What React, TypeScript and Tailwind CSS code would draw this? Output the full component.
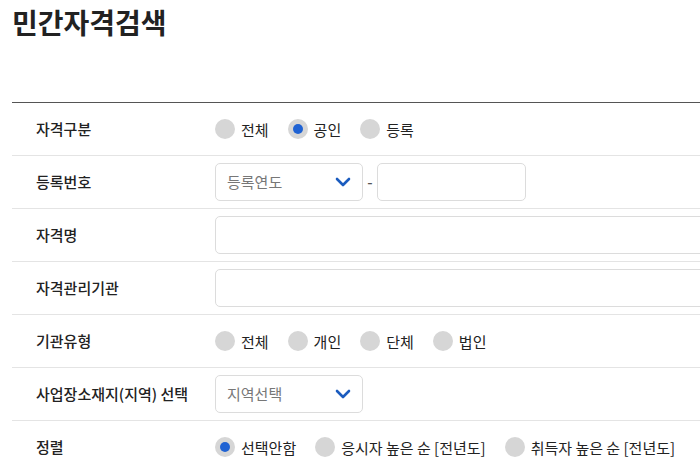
import React from "react";

const font = { fontFamily: '"Noto Sans CJK KR", "Noto Sans", sans-serif' };

function Radio({ label, checked }: { label: string; checked?: boolean }) {
  return (
    <label className="flex items-center gap-[6px] mr-[19px]">
      <span className="w-[20px] h-[20px] rounded-full bg-[#d6d6d6] flex items-center justify-center">
        {checked && <span className="w-[10px] h-[10px] rounded-full bg-[#1f62d3]" />}
      </span>
      <span className="text-[15px] text-[#222] leading-none">{label}</span>
    </label>
  );
}

function Chevron() {
  return (
    <svg width="16" height="10" viewBox="0 0 16 10" fill="none">
      <path d="M2 2l6 6 6-6" stroke="#1b5cbf" strokeWidth="2.6" strokeLinecap="round" strokeLinejoin="round" />
    </svg>
  );
}

function Select({ placeholder }: { placeholder: string }) {
  return (
    <div className="w-[148px] h-[38px] border border-[#dcdcdc] rounded-[5px] flex items-center justify-between pl-[11px] pr-[11px]">
      <span className="text-[15px] text-[#777]">{placeholder}</span>
      <Chevron />
    </div>
  );
}

function Row({ label, children }: { label: string; children: React.ReactNode }) {
  return (
    <div className="h-[53px] border-b border-[#e4e4e4] flex items-center">
      <div className="w-[203px] pl-[24px] text-[15px] font-medium text-[#222] shrink-0">{label}</div>
      <div className="flex items-center">{children}</div>
    </div>
  );
}

export default function App() {
  return (
    <div className="w-[700px] h-[467px] overflow-hidden bg-white" style={font}>
      <div className="w-[1000px] pl-[12px]">
        <h1 className="text-[28px] font-bold text-[#222] leading-[36px] pt-[4px]">민간자격검색</h1>
        <div className="mt-[62px] border-t border-[#555]">
          <Row label="자격구분">
            <Radio label="전체" />
            <Radio label="공인" checked />
            <Radio label="등록" />
          </Row>
          <Row label="등록번호">
            <Select placeholder="등록연도" />
            <span className="w-[14px] text-center text-[15px] text-[#555] font-medium">-</span>
            <div className="w-[149px] h-[38px] border border-[#dcdcdc] rounded-[5px]" />
          </Row>
          <Row label="자격명">
            <div className="w-[600px] h-[38px] border border-[#dcdcdc] rounded-[5px]" />
          </Row>
          <Row label="자격관리기관">
            <div className="w-[600px] h-[38px] border border-[#dcdcdc] rounded-[5px]" />
          </Row>
          <Row label="기관유형">
            <Radio label="전체" />
            <Radio label="개인" />
            <Radio label="단체" />
            <Radio label="법인" />
          </Row>
          <Row label="사업장소재지(지역) 선택">
            <Select placeholder="지역선택" />
          </Row>
          <Row label="정렬">
            <Radio label="선택안함" checked />
            <Radio label="응시자 높은 순 [전년도]" />
            <Radio label="취득자 높은 순 [전년도]" />
          </Row>
        </div>
      </div>
    </div>
  );
}
